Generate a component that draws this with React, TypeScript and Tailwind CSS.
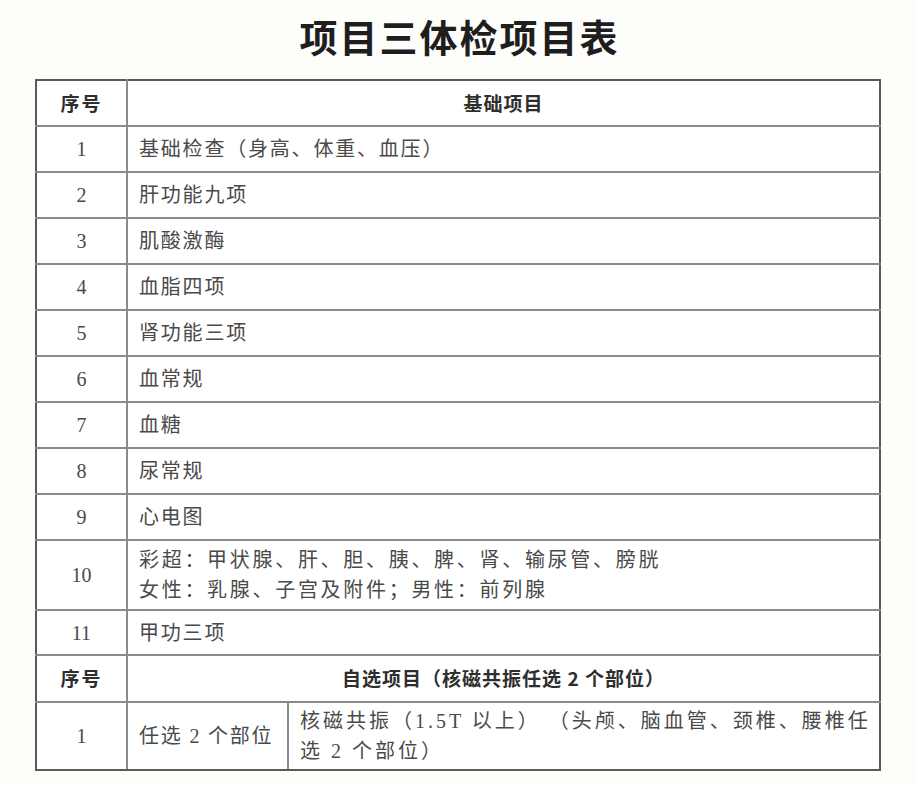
import React from "react";

interface IRow {
  no: string;
  text: string[];
  h: number;
  wide?: boolean;
}

const baseRows: IRow[] = [
  { no: "1", text: ["基础检查（身高、体重、血压）"], h: 46 },
  { no: "2", text: ["肝功能九项"], h: 46 },
  { no: "3", text: ["肌酸激酶"], h: 46 },
  { no: "4", text: ["血脂四项"], h: 46 },
  { no: "5", text: ["肾功能三项"], h: 46 },
  { no: "6", text: ["血常规"], h: 46 },
  { no: "7", text: ["血糖"], h: 46 },
  { no: "8", text: ["尿常规"], h: 46 },
  { no: "9", text: ["心电图"], h: 46 },
  {
    no: "10",
    text: ["彩超：甲状腺、肝、胆、胰、脾、肾、输尿管、膀胱", "女性：乳腺、子宫及附件；男性：前列腺"],
    h: 70,
    wide: true,
  },
  { no: "11", text: ["甲功三项"], h: 45 },
];

const body = {
  fontFamily: '"Liberation Serif", "Noto Sans CJK SC", serif',
};
const heading = {
  fontFamily: '"Noto Sans CJK SC", "Liberation Sans", sans-serif',
};

export default function App() {
  return (
    <div className="w-[917px] h-[785px] bg-[#fdfdf9] overflow-hidden">
      <h1
        style={heading}
        className="pt-[10px] h-[79px] text-center text-[38px] leading-[52px] font-bold tracking-[2px] text-[#1e1e1e] pl-[2px]"
      >
        项目三体检项目表
      </h1>
      <table
        style={body}
        className="ml-[35px] w-[846px] table-fixed border-collapse border-2 border-[#5a5a5a] bg-white text-[#4a4a4a] text-[20px]"
      >
        <colgroup>
          <col className="w-[91px]" />
          <col className="w-[161px]" />
          <col />
        </colgroup>
        <tbody>
          <tr className="h-[46px]">
            <th style={heading} className="border-2 border-[#8a8a8a] border-t-[#5a5a5a] border-l-[#5a5a5a] font-bold text-[19px] tracking-[2px] text-[#2e2e2e]">
              序号
            </th>
            <th colSpan={2} style={heading} className="border-2 border-[#8a8a8a] border-t-[#5a5a5a] border-r-[#5a5a5a] font-bold text-[19px] tracking-[1px] text-[#2e2e2e]">
              基础项目
            </th>
          </tr>
          {baseRows.map((r) => (
            <tr key={r.no} style={{ height: r.h }}>
              <td className="border-2 border-[#8a8a8a] border-l-[#5a5a5a] text-center">{r.no}</td>
              <td
                colSpan={2}
                className={
                  r.wide
                    ? "border-2 border-[#8a8a8a] border-r-[#5a5a5a] pl-[11px] leading-[30px] tracking-[2.7px]"
                    : "border-2 border-[#8a8a8a] border-r-[#5a5a5a] pl-[11px] leading-[30px] tracking-[1.8px]"
                }
              >
                {r.text.map((t) => (
                  <div key={t}>{t}</div>
                ))}
              </td>
            </tr>
          ))}
          <tr className="h-[47px]">
            <th style={heading} className="border-2 border-[#8a8a8a] border-l-[#5a5a5a] font-bold text-[19px] tracking-[2px] text-[#2e2e2e]">
              序号
            </th>
            <th colSpan={2} style={heading} className="border-2 border-[#8a8a8a] border-r-[#5a5a5a] font-bold text-[19px] tracking-[1px] text-[#2e2e2e]">
              自选项目（核磁共振任选 2 个部位）
            </th>
          </tr>
          <tr className="h-[68px]">
            <td className="border-2 border-[#8a8a8a] border-l-[#5a5a5a] border-b-[#5a5a5a] text-center">1</td>
            <td className="border-2 border-[#8a8a8a] border-b-[#5a5a5a] pl-[11px] tracking-[1.8px]">任选 2 个部位</td>
            <td className="border-2 border-[#8a8a8a] border-r-[#5a5a5a] border-b-[#5a5a5a] pl-[11px] pr-[4px] leading-[30px] tracking-[3px] whitespace-nowrap">
              <div>核磁共振（1.5T 以上） （头颅、脑血管、颈椎、腰椎任</div>
              <div>选 2 个部位）</div>
            </td>
          </tr>
        </tbody>
      </table>
    </div>
  );
}
